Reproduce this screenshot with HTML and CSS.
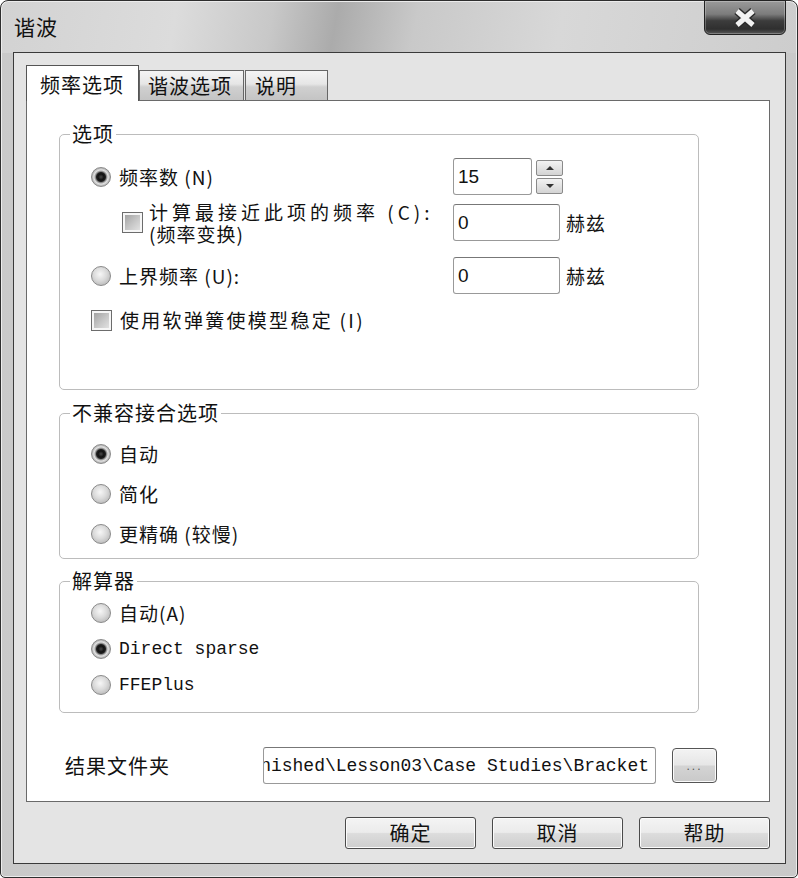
FILE: index.html
```html
<!DOCTYPE html>
<html lang="zh-CN">
<head>
    <meta charset="UTF-8">
    <meta name="viewport" content="width=device-width, initial-scale=1.0">
    <title>谐波</title>
    <link rel="stylesheet" href="styles.css">
</head>

<body>
    <div class="window">
        <!-- 标题栏 -->
        <div class="titlebar">
            <span class="title">谐波</span>
            <button class="close-btn" title="关闭">
                <svg width="26" height="22" viewBox="0 0 26 22">
                    <path d="M5 4 L21 18 M21 4 L5 18" stroke="#2b2b2b" stroke-width="8" fill="none"/>
                    <path d="M5 4 L21 18 M21 4 L5 18" stroke="#f2f2f2" stroke-width="5" fill="none"/>
                </svg>
            </button>
        </div>

        <div class="client">
            <!-- 选项卡 -->
            <div class="tabs">
                <div class="tab active">频率选项</div>
                <div class="tab tab-2">谐波选项</div>
                <div class="tab tab-3">说明</div>
            </div>

            <div class="panel">
                <!-- 选项 -->
                <fieldset class="group group-options">
                    <legend>选项</legend>
                    <div class="group-body">
                        <div class="row">
                            <label class="opt"><span class="radio checked"></span>频率数 (N)</label>
                            <input class="field field-spin" type="text" value="15">
                            <div class="spin">
                                <span class="spin-btn up"></span>
                                <span class="spin-btn down"></span>
                            </div>
                        </div>
                        <div class="row row-sub">
                            <label class="opt opt-sub"><span class="check"></span><span class="two-line"><span class="line wide">计算最接近此项的频率 (C):</span><span class="line">(频率变换)</span></span></label>
                            <input class="field" type="text" value="0">
                            <span class="unit">赫兹</span>
                        </div>
                        <div class="row row-upper">
                            <label class="opt"><span class="radio"></span>上界频率 (U):</label>
                            <input class="field" type="text" value="0">
                            <span class="unit">赫兹</span>
                        </div>
                        <div class="row row-soft">
                            <label class="opt opt-soft"><span class="check"></span>使用软弹簧使模型稳定 (I)</label>
                        </div>
                    </div>
                </fieldset>

                <!-- 不兼容接合选项 -->
                <fieldset class="group group-bond">
                    <legend>不兼容接合选项</legend>
                    <div class="group-body">
                        <div class="row row-40"><label class="opt"><span class="radio checked"></span>自动</label></div>
                        <div class="row row-40"><label class="opt"><span class="radio"></span>简化</label></div>
                        <div class="row row-40"><label class="opt"><span class="radio"></span>更精确 (较慢)</label></div>
                    </div>
                </fieldset>

                <!-- 解算器 -->
                <fieldset class="group group-solver">
                    <legend>解算器</legend>
                    <div class="group-body">
                        <div class="row row-36"><label class="opt"><span class="radio"></span>自动(A)</label></div>
                        <div class="row row-36"><label class="opt mono"><span class="radio checked"></span>Direct sparse</label></div>
                        <div class="row row-36"><label class="opt mono"><span class="radio"></span>FFEPlus</label></div>
                    </div>
                </fieldset>

                <!-- 结果文件夹 -->
                <div class="folder-row">
                    <span class="folder-label">结果文件夹</span>
                    <div class="path-field"><span>Finished\Lesson03\Case Studies\Bracket</span></div>
                    <button class="browse-btn">...</button>
                </div>
            </div>

            <!-- 底部按钮 -->
            <div class="actions">
                <button class="btn">确定</button>
                <button class="btn">取消</button>
                <button class="btn">帮助</button>
            </div>
        </div>
    </div>
</body>

</html>
```

FILE: styles.css
```css
body {
    margin: 0;
    background: #fff;
    font-family: "Noto Sans CJK SC", sans-serif;
    color: #111;
}

/* 窗口外框：标题栏渐变只铺在顶部，其余为浅灰边框 */
.window {
    width: 798px;
    height: 878px;
    box-sizing: border-box;
    border: 1px solid #2e2e2e;
    border-radius: 8px 8px 5px 5px;
    padding: 0 11px 13px 12px;
    background:
        linear-gradient(100deg, #d2d2d2 0%, #dcdcdc 22%, #c8c8c8 34%, #ababab 42%, #c9c9c9 52%, #d8d8d8 70%, #cdcdcd 100%) 0 0 / 100% 52px no-repeat,
        linear-gradient(90deg, #c9c9c9 0%, #d3d3d3 50%, #c9c9c9 100%);
    box-shadow: inset 0 0 0 1px #ececec;
}

.titlebar {
    height: 51px;
    display: flex;
    justify-content: space-between;
    align-items: flex-start;
}

.title {
    padding: 12px 0 0 1px;
    font-size: 21px;
    line-height: 26px;
    letter-spacing: 1px;
}

.close-btn {
    width: 82px;
    height: 35px;
    margin-top: -1px;
    padding: 0;
    border: 1px solid #222;
    border-radius: 0 0 6px 6px;
    background: linear-gradient(#9a9a9a 0%, #7c7c7c 40%, #3c3c3c 60%, #2f2f2f 85%, #5a5a5a 100%);
    display: flex;
    justify-content: center;
    align-items: center;
    box-shadow: inset 0 0 0 1px rgba(255, 255, 255, 0.25);
}

/* 客户区 */
.client {
    border: 1px solid #3a3a3a;
    background: #e4e4e4;
    padding: 12px 15px 14px 12px;
}

.tabs {
    display: flex;
    align-items: flex-end;
    height: 35px;
}

.tab {
    box-sizing: border-box;
    height: 30px;
    border: 1px solid #666;
    border-bottom: none;
    background: linear-gradient(#f4f4f4 0%, #e6e6e6 45%, #d0d0d0 55%, #c4c4c4 100%);
    font-size: 20px;
    line-height: 22px;
    letter-spacing: 1px;
    padding: 4px 0 0 8px;
}

.tab.active {
    width: 113px;
    height: 36px;
    margin-bottom: -1px;
    position: relative;
    z-index: 1;
    background: #fff;
    border-color: #555;
    padding: 8px 0 0 13px;
}

.tab-2 {
    width: 105px;
}

.tab-3 {
    width: 83px;
    margin-left: 1px;
    padding-left: 9px;
}

.panel {
    border: 1px solid #6a6a6a;
    background: #fff;
    padding: 23px 0 17px 32px;
}

/* 分组框 */
.group {
    box-sizing: border-box;
    width: 640px;
    min-width: 0;
    margin: 0;
    padding: 0;
    border: 1px solid #bcbcbc;
    border-radius: 5px;
}

.group legend {
    margin-left: 10px;
    padding: 0 2px;
    font-size: 20px;
    line-height: 20px;
    letter-spacing: 1px;
}

.group-bond {
    margin-top: 13px;
}

.group-solver {
    margin-top: 12px;
}

.group-options .group-body {
    padding: 14px 0 57px 31px;
}

.group-bond .group-body {
    padding: 11px 0 4px 31px;
}

.group-solver .group-body {
    padding: 4px 0 9px 31px;
}

.row {
    display: flex;
    align-items: center;
}

.row-sub {
    margin-top: 5px;
}

.row-upper {
    margin-top: 12px;
}

.row-soft {
    margin-top: 14px;
    height: 24px;
}

.row-40 {
    height: 40px;
}

.row-36 {
    height: 36px;
}

.opt {
    box-sizing: border-box;
    width: 362px;
    display: flex;
    align-items: center;
    gap: 8px;
    font-size: 19px;
    line-height: 22px;
    letter-spacing: 1px;
    white-space: nowrap;
}

.opt-sub {
    padding-left: 31px;
    gap: 6px;
}

.opt-soft {
    letter-spacing: 2.3px;
}

.two-line {
    display: flex;
    flex-direction: column;
    padding-top: 1px;
}

.two-line .line {
    height: 22px;
}

.two-line .wide {
    letter-spacing: 4px;
}

.mono {
    font-family: "Liberation Mono", monospace;
    font-size: 18px;
    letter-spacing: 0;
}

/* 单选按钮 */
.radio {
    flex: none;
    width: 20px;
    height: 20px;
    box-sizing: border-box;
    border-radius: 50%;
    border: 1px solid #8a8a8a;
    background: radial-gradient(circle at 45% 40%, #f7f7f7 0%, #dadada 45%, #a8a8a8 100%);
}

.radio.checked {
    background: radial-gradient(circle, #4a4a4a 0, #111 3px, #222 4.5px, #888 5.5px, #e2e2e2 7px, #b4b4b4 9px, #9a9a9a 10px);
}

/* 复选框 */
.check {
    flex: none;
    width: 21px;
    height: 21px;
    box-sizing: border-box;
    border: 1px solid #6c6c6c;
    background: linear-gradient(135deg, #9a9a9a 0%, #c8c8c8 55%, #e8e8e8 100%);
    box-shadow: inset 0 0 0 2px #f6f6f6;
}

/* 输入框 */
.field {
    box-sizing: border-box;
    width: 107px;
    height: 37px;
    margin: 0;
    padding: 0 4px;
    border: 1px solid #999;
    border-top-color: #777;
    border-radius: 3px;
    background: #fff;
    font-family: "Liberation Sans", sans-serif;
    font-size: 19px;
    color: #111;
}

.field-spin {
    width: 79px;
}

.unit {
    margin-left: 6px;
    font-size: 19px;
    letter-spacing: 1px;
}

.spin {
    display: flex;
    flex-direction: column;
    gap: 2px;
    margin-left: 4px;
}

.spin-btn {
    box-sizing: border-box;
    width: 27px;
    height: 16px;
    border: 1px solid #8a8a8a;
    border-radius: 2px;
    background: linear-gradient(#f3f3f3, #d4d4d4);
    display: flex;
    justify-content: center;
    align-items: center;
}

.spin-btn::after {
    content: "";
    border-left: 4px solid transparent;
    border-right: 4px solid transparent;
}

.spin-btn.up::after {
    border-bottom: 4px solid #333;
}

.spin-btn.down::after {
    border-top: 4px solid #333;
}

/* 结果文件夹 */
.folder-row {
    display: flex;
    align-items: center;
    margin-top: 34px;
    padding-left: 6px;
}

.folder-label {
    width: 198px;
    font-size: 20px;
    letter-spacing: 1px;
}

.path-field {
    box-sizing: border-box;
    width: 393px;
    height: 37px;
    border: 1px solid #999;
    border-top-color: #777;
    border-radius: 3px;
    display: flex;
    justify-content: flex-end;
    align-items: center;
    overflow: hidden;
    white-space: nowrap;
    padding-right: 6px;
    font-family: "Liberation Mono", monospace;
    font-size: 18px;
}

.browse-btn {
    box-sizing: border-box;
    width: 45px;
    height: 35px;
    margin-left: 16px;
    padding: 0;
    border: 1px solid #555;
    border-radius: 4px;
    background: linear-gradient(#f3f3f3 0%, #e6e6e6 48%, #d4d4d4 52%, #c9c9c9 100%);
    box-shadow: inset 0 0 0 1px #fafafa;
    font-size: 12px;
    color: #555;
    letter-spacing: 2px;
}

/* 底部按钮 */
.actions {
    display: flex;
    justify-content: flex-end;
    gap: 16px;
    margin-top: 15px;
}

.btn {
    box-sizing: border-box;
    width: 131px;
    height: 32px;
    padding: 0;
    border: 1px solid #4a4a4a;
    border-radius: 3px;
    background: linear-gradient(#f4f4f4 0%, #ebebeb 48%, #dcdcdc 52%, #cecece 100%);
    box-shadow: inset 0 0 0 1px #fbfbfb;
    font-family: "Noto Sans CJK SC", sans-serif;
    font-size: 20px;
    line-height: 28px;
    letter-spacing: 1px;
    color: #111;
}
```
